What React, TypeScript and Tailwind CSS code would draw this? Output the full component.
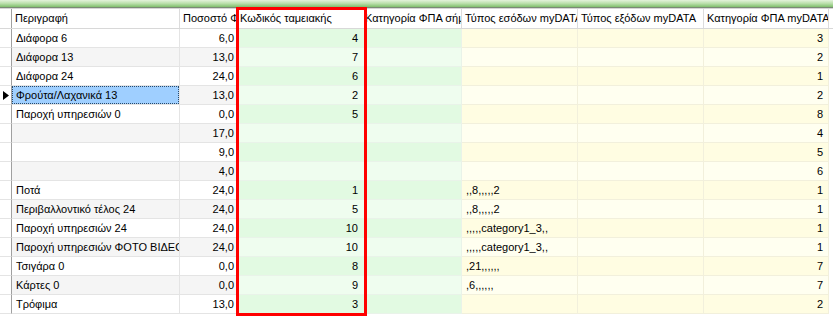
import React from "react";

type Row = {
  desc: string;
  vat: string;
  code: string;
  cat: string;
  income: string;
  expense: string;
  mydata: string;
};

const rows: Row[] = [
  { desc: "Διάφορα 6", vat: "6,0", code: "4", cat: "", income: "", expense: "", mydata: "3" },
  { desc: "Διάφορα 13", vat: "13,0", code: "7", cat: "", income: "", expense: "", mydata: "2" },
  { desc: "Διάφορα 24", vat: "24,0", code: "6", cat: "", income: "", expense: "", mydata: "1" },
  { desc: "Φρούτα/Λαχανικά 13", vat: "13,0", code: "2", cat: "", income: "", expense: "", mydata: "2" },
  { desc: "Παροχή υπηρεσιών 0", vat: "0,0", code: "5", cat: "", income: "", expense: "", mydata: "8" },
  { desc: "", vat: "17,0", code: "", cat: "", income: "", expense: "", mydata: "4" },
  { desc: "", vat: "9,0", code: "", cat: "", income: "", expense: "", mydata: "5" },
  { desc: "", vat: "4,0", code: "", cat: "", income: "", expense: "", mydata: "6" },
  { desc: "Ποτά", vat: "24,0", code: "1", cat: "", income: ",,8,,,,,2", expense: "", mydata: "1" },
  { desc: "Περιβαλλοντικό τέλος 24", vat: "24,0", code: "5", cat: "", income: ",,8,,,,,2", expense: "", mydata: "1" },
  { desc: "Παροχή υπηρεσιών 24", vat: "24,0", code: "10", cat: "", income: ",,,,,category1_3,,", expense: "", mydata: "1" },
  { desc: "Παροχή υπηρεσιών ΦΟΤΟ ΒΙΔΕΟΣΚΟΠΗΣΗΣ", vat: "24,0", code: "10", cat: "", income: ",,,,,category1_3,,", expense: "", mydata: "1" },
  { desc: "Τσιγάρα 0", vat: "0,0", code: "8", cat: "", income: ",21,,,,,,", expense: "", mydata: "7" },
  { desc: "Κάρτες 0", vat: "0,0", code: "9", cat: "", income: ",6,,,,,,", expense: "", mydata: "7" },
  { desc: "Τρόφιμα", vat: "13,0", code: "3", cat: "", income: "", expense: "", mydata: "2" },
];

const headers = [
  "Περιγραφή",
  "Ποσοστό ΦΠΑ",
  "Κωδικός ταμειακής",
  "Κατηγορία ΦΠΑ σήμανσης",
  "Τύπος εσόδων myDATA",
  "Τύπος εξόδων myDATA",
  "Κατηγορία ΦΠΑ myDATA",
];

const cols = "grid grid-cols-[12px_168px_57px_128px_97px_116px_126px_125px_4px]";

export default function App() {
  return (
    <div className="relative w-[833px] h-[317px] overflow-hidden bg-white text-[11px] text-black font-['Liberation_Sans',Arial,sans-serif]">
      {/* panel top band */}
      <div className="h-[7px] bg-gradient-to-b from-[#e4f3dc] via-[#b9dfaa] to-[#7fbf6c]" />
      <div className="h-px bg-[#7a8a74]" />
      <div className="h-px bg-[#d6d6d6]" />

      {/* header */}
      <div className={`${cols} h-[20px] border-b border-[#d8d8d8]`}>
        <div className="border-r border-[#a0a0a0] bg-white" />
        {headers.map((h, i) => (
          <div
            key={h}
            className={`flex items-center overflow-hidden whitespace-nowrap border-r border-[#dcdcdc] ${i === 3 ? "pl-0" : "pl-[3px]"}`}
          >
            {h}
          </div>
        ))}
        <div />
      </div>

      {/* rows */}
      {rows.map((r, i) => {
        const odd = i % 2 === 0;
        const plain = odd ? "bg-white" : "bg-[#f5f5f5]";
        const green = odd ? "bg-[#e2fae2]" : "bg-[#effdef]";
        const yellow = odd ? "bg-[#fffde2]" : "bg-[#fffff0]";
        const selected = i === 3;
        return (
          <div key={i} className={`${cols} h-[19px]`}>
            <div className="flex items-center justify-center border-r border-[#a0a0a0] border-b border-b-[#e4e4e4] bg-white">
              {selected && (
                <svg width="6" height="9" viewBox="0 0 6 9">
                  <path d="M0 0 L6 4.5 L0 9 Z" fill="#000" />
                </svg>
              )}
            </div>
            <div className={`flex items-center overflow-hidden whitespace-nowrap border-r border-b border-[#e4e4e4] ${plain}`}>
              {selected ? (
                <div className="flex h-full w-full items-center border border-dotted border-[#2a4a6a] bg-[#9fcfff] pl-[3px]">
                  {r.desc}
                </div>
              ) : (
                <span className="pl-[4px]">{r.desc}</span>
              )}
            </div>
            <div className={`flex items-center justify-end pr-[2px] border-r border-b border-[#e4e4e4] ${plain}`}>{r.vat}</div>
            <div className={`flex items-center justify-end pr-[6px] border-r border-b border-[#e9f3e9] ${green}`}>{r.code}</div>
            <div className={`flex items-center border-r border-b border-[#e9f3e9] ${green}`}>{r.cat}</div>
            <div className={`flex items-center overflow-visible whitespace-nowrap pl-[4px] border-r border-b border-[#f2f0dc] ${yellow}`}>{r.income}</div>
            <div className={`flex items-center border-r border-b border-[#f2f0dc] ${yellow}`}>{r.expense}</div>
            <div className={`flex items-center justify-end pr-[5px] border-r border-b border-[#f2f0dc] ${yellow}`}>{r.mydata}</div>
            <div />
          </div>
        );
      })}

      {/* red annotation frame */}
      <div className="absolute left-[236px] top-[7px] h-[309px] w-[131px] border-[3px] border-[#ff0000]" />
    </div>
  );
}
